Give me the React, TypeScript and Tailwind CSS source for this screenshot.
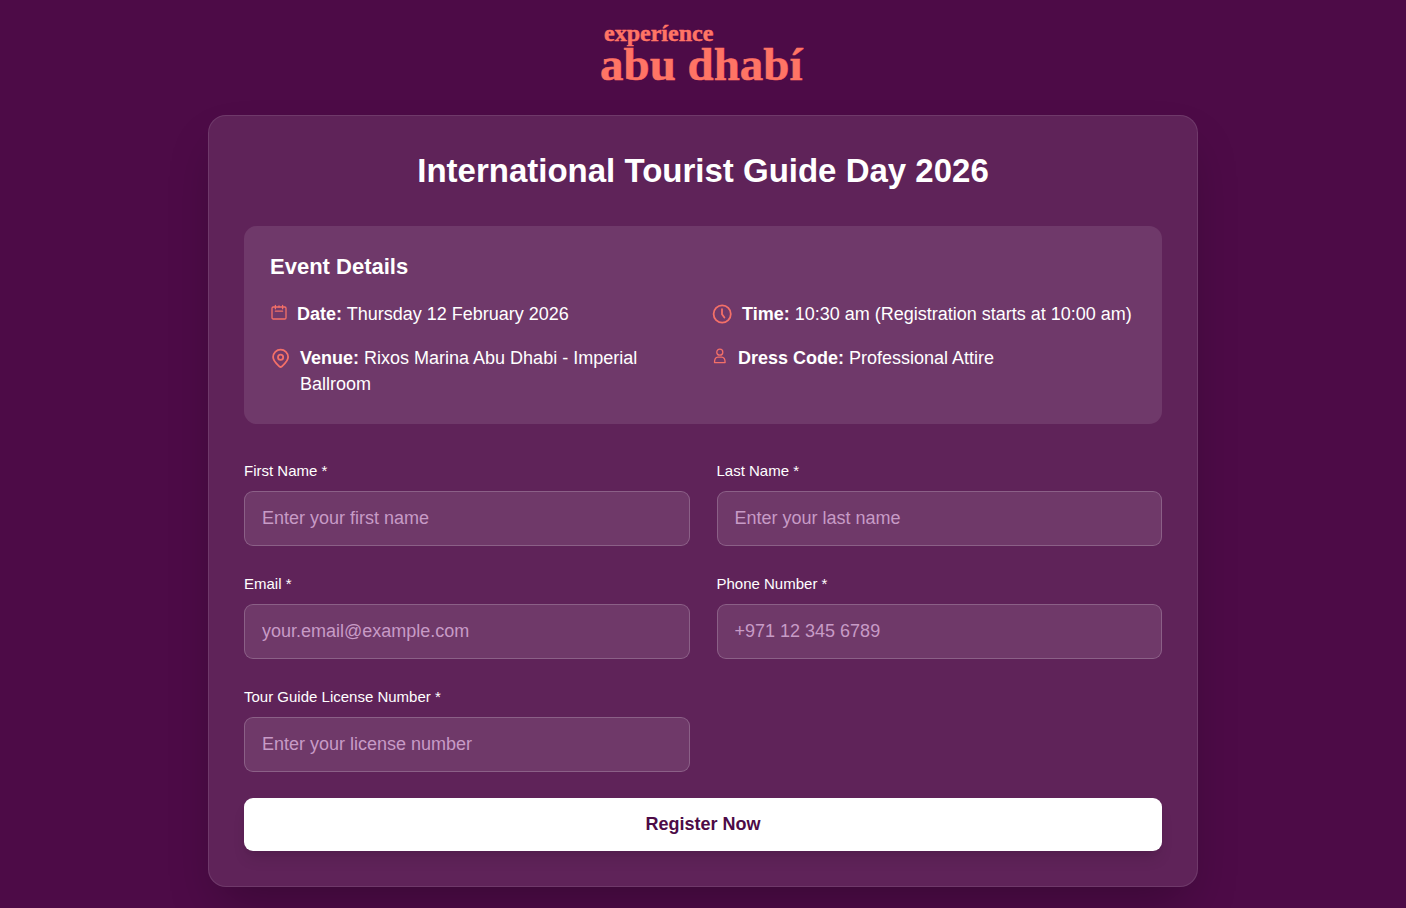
import { useState } from "react"
import type { ChangeEvent, FormEvent, ReactNode } from "react"

interface Field {
  name: string
  label: string
  type: string
  placeholder: string
}

const fields: Field[] = [
  { name: "firstName", label: "First Name *", type: "text", placeholder: "Enter your first name" },
  { name: "lastName", label: "Last Name *", type: "text", placeholder: "Enter your last name" },
  { name: "email", label: "Email *", type: "email", placeholder: "your.email@example.com" },
  { name: "phone", label: "Phone Number *", type: "tel", placeholder: "+971 12 345 6789" },
  { name: "license", label: "Tour Guide License Number *", type: "text", placeholder: "Enter your license number" },
]

function Logo() {
  return (
    <svg width="208" height="80" viewBox="0 0 208 80" className="font-['Liberation_Serif',serif] font-bold" fill="#ff7465" stroke="#ff7465" strokeWidth="0.5">
      <text>
        <tspan x="5" y="25" fontSize="24">experíence</tspan>
        <tspan x="1" y="64" fontSize="47">abu dhabí</tspan>
      </text>
    </svg>
  )
}

function CalendarIcon() {
  return (
    <svg width="18" height="18" viewBox="0 0 18 18" fill="none" stroke="currentColor" strokeWidth="1.3" strokeLinecap="round" strokeLinejoin="round">
      <rect x="2" y="3" width="14" height="12" rx="1.2" />
      <path d="M5.4 1.4v3.4M12.6 1.4v3.4M9 1.8v1.2M5.4 7.2h7.2" />
    </svg>
  )
}

function ClockIcon() {
  return (
    <svg width="21" height="21" viewBox="0 0 21 21" fill="none" stroke="currentColor" strokeWidth="1.8" strokeLinecap="round" strokeLinejoin="round">
      <circle cx="10.2" cy="10" r="8.6" />
      <path d="M10 5.2v5l2.4 3.4" />
    </svg>
  )
}

function PinIcon() {
  return (
    <svg width="21" height="21" viewBox="0 0 21 21" fill="none" stroke="currentColor" strokeWidth="1.8" strokeLinecap="round" strokeLinejoin="round">
      <path d="M18.1 9.1c0 4.2-4.2 7.4-6.4 9.4a1.6 1.6 0 0 1-2.2 0c-2.2-2-6.4-5.2-6.4-9.4a7.5 7.5 0 0 1 15 0Z" />
      <circle cx="10.6" cy="9.3" r="2.6" />
    </svg>
  )
}

function PersonIcon() {
  return (
    <svg width="17" height="18" viewBox="0 0 17 18" fill="none" stroke="currentColor" strokeWidth="1.3" strokeLinecap="round" strokeLinejoin="round">
      <circle cx="7.8" cy="4.2" r="3" />
      <path d="M5.9 9.2h3.8c2.2 0 3.4 1.8 3.4 5.4H2.5c0-3.6 1.2-5.4 3.4-5.4Z" />
    </svg>
  )
}

function Detail({ icon, label, children }: { icon: ReactNode; label: string; children: ReactNode }) {
  return (
    <div className="flex items-start gap-[9px]">
      <span className="mt-[3px] shrink-0 text-[#f47068]">{icon}</span>
      <p>
        <strong className="font-bold">{label}</strong> {children}
      </p>
    </div>
  )
}

export default function App() {
  const [values, setValues] = useState<Record<string, string>>({})

  const handleChange = (e: ChangeEvent<HTMLInputElement>) => {
    setValues({ ...values, [e.target.name]: e.target.value })
  }

  const handleSubmit = (e: FormEvent) => {
    e.preventDefault()
  }

  return (
    <div className="min-h-screen bg-[#4d0b47] px-4 pt-4 pb-5 font-['Liberation_Sans',Arial,sans-serif] text-white">
      <header className="flex justify-center pb-[19px]">
        <Logo />
      </header>

      <main className="mx-auto max-w-[990px] rounded-[18px] border border-white/10 bg-white/10 p-[35px] shadow-2xl">
        <h1 className="text-center text-[33px] leading-10 font-bold">International Tourist Guide Day 2026</h1>

        <section className="mt-[35px] rounded-[13px] bg-white/10 px-[26px] py-[27px]">
          <h2 className="text-[22px] leading-7 font-bold">Event Details</h2>
          <div className="mt-5 grid grid-cols-1 gap-[18px] text-[18px] leading-[26px] md:grid-cols-2">
            <Detail icon={<CalendarIcon />} label="Date:">
              Thursday 12 February 2026
            </Detail>
            <Detail icon={<ClockIcon />} label="Time:">
              10:30 am (Registration starts at 10:00 am)
            </Detail>
            <Detail icon={<PinIcon />} label="Venue:">
              Rixos Marina Abu Dhabi - Imperial Ballroom
            </Detail>
            <Detail icon={<PersonIcon />} label="Dress Code:">
              Professional Attire
            </Detail>
          </div>
        </section>

        <form onSubmit={handleSubmit} className="mt-9">
          <div className="grid grid-cols-1 gap-[27px] md:grid-cols-2">
            {fields.map((field) => (
              <div key={field.name}>
                <label htmlFor={field.name} className="mb-[9px] block text-[15px] leading-[22px]">
                  {field.label}
                </label>
                <input
                  id={field.name}
                  name={field.name}
                  type={field.type}
                  value={values[field.name] || ""}
                  onChange={handleChange}
                  placeholder={field.placeholder}
                  className="h-[55px] w-full rounded-[9px] border border-white/20 bg-white/10 px-[17px] text-[18px] text-white placeholder:text-[#c79bc6] focus:ring-2 focus:ring-white/40 focus:outline-none"
                />
              </div>
            ))}
          </div>
          <button
            type="submit"
            className="mt-[26px] h-[53px] w-full rounded-[9px] bg-white text-[18px] font-bold text-[#4d0b47] shadow-lg hover:bg-white/90"
          >
            Register Now
          </button>
        </form>
      </main>
    </div>
  )
}
